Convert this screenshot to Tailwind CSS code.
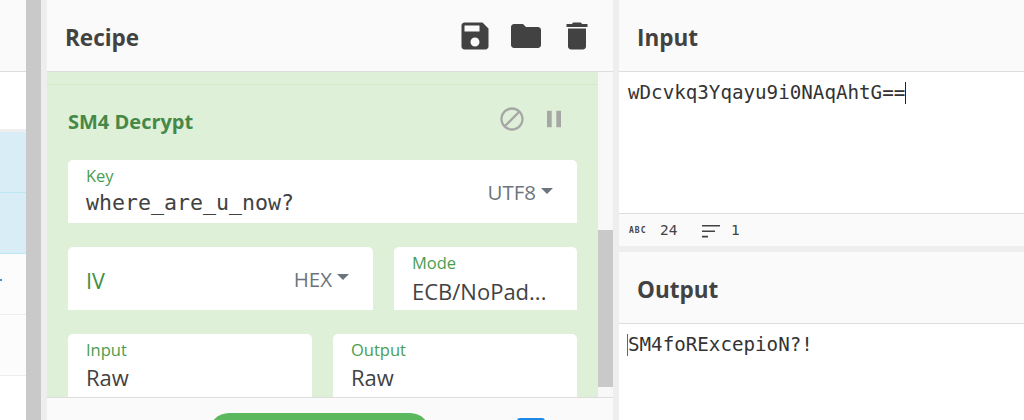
<!DOCTYPE html>
<html lang="en">
<head>
    <meta charset="UTF-8">
    <title>CyberChef</title>
    <script src="https://cdn.jsdelivr.net/npm/@tailwindcss/browser@4"></script>
</head>
<body class="bg-white">
    <div class="flex w-[1024px] h-[420px] overflow-hidden font-['Open_Sans',sans-serif] text-[#424242]">

        <!-- Operations (cut off) -->
        <div class="w-[26px] flex flex-col shrink-0 bg-white">
            <div class="h-[72px] shrink-0 bg-[#fafafa] border-b border-[#ddd]"></div>
            <div class="h-[57px] shrink-0"></div>
            <div class="h-[3px] shrink-0 bg-[#eee]"></div>
            <div class="h-[61px] shrink-0 bg-[#d9edf7] border-b border-[#bce8f1]"></div>
            <div class="h-[61px] shrink-0 bg-[#d9edf7] border-b border-[#bce8f1]"></div>
            <div class="h-[61px] shrink-0 bg-[#fcfcfc] border-b border-[#eee] relative">
                <span class="absolute left-0 top-[25px] w-[2px] h-[2px] bg-[#4a90d9]"></span>
            </div>
            <div class="h-[61px] shrink-0 bg-[#fcfcfc] border-b border-[#eee]"></div>
        </div>
        <div class="w-[15px] shrink-0 bg-[#c9c9c9]"></div>
        <div class="w-[6px] shrink-0 bg-[#eee]"></div>

        <!-- Recipe -->
        <div class="w-[566px] shrink-0 flex flex-col">
            <div class="h-[72px] shrink-0 bg-[#fafafa] border-b border-[#ddd] flex items-center justify-between pl-[18px] pr-[18px]">
                <h2 class="text-[22.5px] font-bold leading-none pt-[5px]">Recipe</h2>
                <div class="flex gap-[15px]">
                    <svg class="w-9 h-9" viewBox="0 0 24 24" fill="#424242"><path d="M17 3H5c-1.11 0-2 .9-2 2v14c0 1.1.89 2 2 2h14c1.1 0 2-.9 2-2V7l-4-4zm-5 16c-1.66 0-3-1.34-3-3s1.34-3 3-3 3 1.34 3 3-1.34 3-3 3zm3-10H5V5h10v4z"/></svg>
                    <svg class="w-9 h-9" viewBox="0 0 24 24" fill="#424242"><path d="M10 4H4c-1.1 0-1.99.9-1.99 2L2 18c0 1.1.9 2 2 2h16c1.1 0 2-.9 2-2V8c0-1.1-.9-2-2-2h-8l-2-2z"/></svg>
                    <svg class="w-9 h-9" viewBox="0 0 24 24" fill="#424242"><path d="M6 19c0 1.1.9 2 2 2h8c1.1 0 2-.9 2-2V7H6v12zM19 4h-3.5l-1-1h-5l-1 1H5v2h14V4z"/></svg>
                </div>
            </div>

            <div class="h-[325px] shrink-0 flex overflow-hidden">
                <div class="w-[551px] shrink-0 bg-[#dff0d8]">
                    <div class="h-[13px] border-b border-[#d6e9c6]"></div>
                    <div class="px-[21px]">
                        <div class="h-[75px] flex items-center justify-between pr-[9px]">
                            <h3 class="text-[20px] font-bold text-[#468847] leading-none pb-[2px]">SM4 Decrypt</h3>
                            <div class="flex gap-[14px] pb-[8px]">
                                <svg class="w-7 h-7" viewBox="0 0 24 24" fill="#a6a6a6"><path d="M12 2C6.48 2 2 6.48 2 12s4.48 10 10 10 10-4.48 10-10S17.52 2 12 2zM4 12c0-4.42 3.58-8 8-8 1.85 0 3.55.63 4.9 1.69L5.69 16.9C4.63 15.55 4 13.85 4 12zm8 8c-1.85 0-3.55-.63-4.9-1.69L18.31 7.1C19.37 8.45 20 10.15 20 12c0 4.42-3.58 8-8 8z"/></svg>
                                <svg class="w-7 h-7" viewBox="0 0 24 24" fill="#a6a6a6"><path d="M6 19h4V5H6v14zm8-14v14h4V5h-4z"/></svg>
                            </div>
                        </div>

                        <div class="flex flex-col gap-[24px] w-[509px]">
                            <!-- Key -->
                            <div class="h-[63px] bg-white rounded-t-[5px] flex justify-between pl-[18px] pr-[24px]">
                                <div>
                                    <div class="text-[16.5px] leading-[20px] pt-[6px] h-[26px] text-[#4a9d50]">Key</div>
                                    <div class="font-['DejaVu_Sans_Mono',monospace] text-[21.6px] leading-[28px] mt-[3px]">where_are_u_now?</div>
                                </div>
                                <div class="flex items-center gap-[5px] pt-[2px] text-[#6c757d] text-[20.5px]">
                                    <span>UTF8</span>
                                    <span class="w-0 h-0 border-x-[6px] border-x-transparent border-t-[6px] border-t-[#6c757d] mb-[4px]"></span>
                                </div>
                            </div>
                            <!-- IV + Mode -->
                            <div class="flex gap-[21px]">
                                <div class="w-[305px] h-[63px] bg-white rounded-t-[5px] flex items-center justify-between pl-[18px] pr-[24px]">
                                    <span class="text-[21.6px] text-[#3d9142] pt-[5px]">IV</span>
                                    <div class="flex items-center gap-[5px] pt-[1px] text-[#6c757d] text-[20.5px]">
                                        <span>HEX</span>
                                        <span class="w-0 h-0 border-x-[6px] border-x-transparent border-t-[6px] border-t-[#6c757d] mb-[4px]"></span>
                                    </div>
                                </div>
                                <div class="w-[183px] h-[63px] bg-white rounded-t-[5px] pl-[18px] pr-[14px]">
                                    <div class="text-[16.5px] leading-[20px] pt-[6px] h-[26px] text-[#4a9d50]">Mode</div>
                                    <div class="text-[22px] leading-[30px] mt-[3px] whitespace-nowrap">ECB/NoPad...</div>
                                </div>
                            </div>
                            <!-- Input + Output -->
                            <div class="flex gap-[21px]">
                                <div class="w-[244px] h-[63px] bg-white rounded-t-[5px] pl-[18px]">
                                    <div class="text-[16.5px] leading-[20px] pt-[6px] h-[26px] text-[#4a9d50]">Input</div>
                                    <div class="text-[22px] leading-[30px] mt-[2px]">Raw</div>
                                </div>
                                <div class="w-[244px] h-[63px] bg-white rounded-t-[5px] pl-[18px]">
                                    <div class="text-[16.5px] leading-[20px] pt-[6px] h-[26px] text-[#4a9d50]">Output</div>
                                    <div class="text-[22px] leading-[30px] mt-[2px]">Raw</div>
                                </div>
                            </div>
                        </div>
                    </div>
                </div>
                <div class="w-[15px] shrink-0 bg-[#f8f8f8] pt-[158px]">
                    <div class="h-[157px] bg-[#c9c9c9]"></div>
                </div>
            </div>

            <!-- Bake bar -->
            <div class="flex-1 bg-[#fafafa] border-t border-[#ddd] pl-[162px] pt-[15px] flex gap-[87px] items-start">
                <div class="w-[221px] h-[40px] bg-[#5cb85c] rounded-full"></div>
                <div class="w-[28px] h-[20px] mt-[5px] bg-[#1e88e5] rounded-t-[3px]"></div>
            </div>
        </div>

        <div class="w-[6px] shrink-0 bg-[#eee]"></div>

        <!-- Input / Output -->
        <div class="flex-1 flex flex-col min-w-0">
            <div class="h-[72px] shrink-0 bg-[#fafafa] border-b border-[#ddd] flex items-center pl-[18px]">
                <h2 class="text-[22.5px] font-bold leading-none pt-[5px]">Input</h2>
            </div>
            <div class="h-[141px] shrink-0 pl-[9px] pt-[10px] font-['DejaVu_Sans_Mono',monospace] text-[19.2px] leading-[22px] text-[#333]">
                <span class="border-r border-[#222] inline-block">wDcvkq3Yqayu9i0NAqAhtG==</span>
            </div>
            <div class="h-[33px] shrink-0 bg-[#fafafa] border-t border-[#ddd] flex items-center pl-[10px] pt-[1px] text-[14.4px] text-[#424242] font-['DejaVu_Sans_Mono',monospace]">
                <span class="font-bold text-[8px] w-[21px] tracking-[1px]">ABC</span>
                <span class="ml-[10px] w-[41px]">24</span>
                <svg class="w-[20px] h-[20px]" viewBox="0 0 20 20" fill="#424242"><path d="M1 4h18v1.6H1zM1 9.4h13v1.6H1zM1 14.8h6v1.6H1z"/></svg>
                <span class="ml-[10px]">1</span>
            </div>
            <div class="h-[6px] shrink-0 bg-[#eee]"></div>
            <div class="h-[72px] shrink-0 bg-[#fafafa] border-b border-[#ddd] flex items-center pl-[18px]">
                <h2 class="text-[22.5px] font-bold leading-none pt-[5px]">Output</h2>
            </div>
            <div class="flex-1 pl-[8px] pt-[10px] font-['DejaVu_Sans_Mono',monospace] text-[19.2px] leading-[22px] text-[#333]">
                <span class="border-l border-[#666] inline-block">SM4foRExcepioN?!</span>
            </div>
        </div>
    </div>
</body>
</html>
